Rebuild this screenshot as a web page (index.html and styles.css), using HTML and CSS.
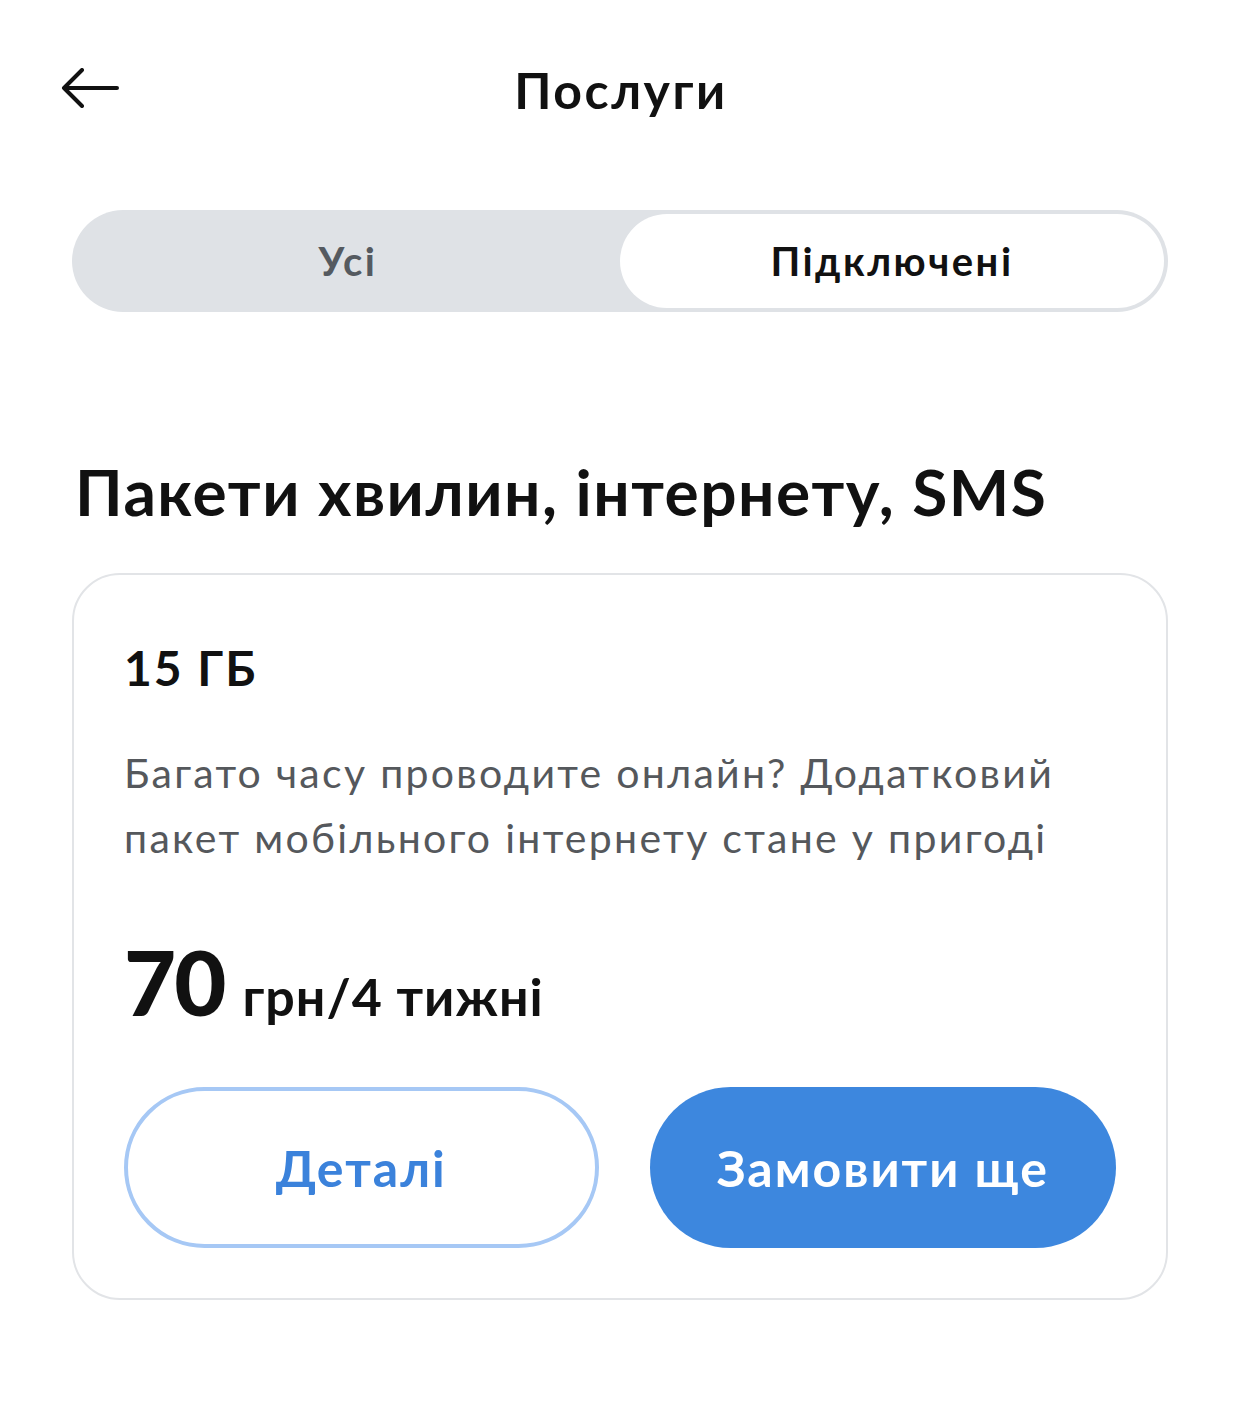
FILE: index.html
```html
<!DOCTYPE html>
<html lang="uk">
<head>
    <meta charset="UTF-8">
    <meta name="viewport" content="width=device-width, initial-scale=1.0">
    <title>Послуги</title>
    <link rel="stylesheet" href="styles.css">
</head>
<body>

    <!-- Header -->
    <div class="header">
        <a class="back" href="#">
            <svg width="60" height="40" viewBox="0 0 60 40">
                <path d="M57 20H4M22 2L4 20L22 38" fill="none" stroke="#111" stroke-width="4" stroke-linecap="round" stroke-linejoin="round"/>
            </svg>
        </a>
        <h1>Послуги</h1>
    </div>

    <div class="container">
        <!-- Tabs -->
        <div class="tabs">
            <div class="tab">Усі</div>
            <div class="tab active">Підключені</div>
        </div>

        <h2 class="section-title">Пакети хвилин, інтернету, SMS</h2>

        <!-- Package card -->
        <div class="card">
            <div class="card-name">15 ГБ</div>
            <p class="card-text">Багато часу проводите онлайн? Додатковий пакет мобільного інтернету стане у пригоді</p>
            <div class="price">
                <span class="price-value">70</span>
                <span class="price-unit">грн/4 тижні</span>
            </div>
            <div class="buttons">
                <button class="btn btn-outline" type="button">Деталі</button>
                <button class="btn btn-primary" type="button">Замовити ще</button>
            </div>
        </div>
    </div>

</body>
</html>
```

FILE: styles.css
```css
/* Basic reset */
* {
    margin: 0;
    padding: 0;
    box-sizing: border-box;
}

body {
    font-family: Lato, "Open Sans", Arial, sans-serif;
    background-color: #fff;
    color: #111;
    width: 1242px;
}

.header {
    height: 180px;
    display: flex;
    align-items: center;
    justify-content: center;
    position: relative;
}

.back {
    position: absolute;
    left: 60px;
    top: 68px;
    display: block;
    line-height: 0;
}

.header h1 {
    font-size: 50px;
    font-weight: 700;
    letter-spacing: 2.5px;
}

.container {
    padding: 30px 74px 0 72px;
}

.tabs {
    display: flex;
    height: 102px;
    padding: 4px;
    background-color: #dfe2e6;
    border-radius: 51px;
}

.tab {
    flex: 1;
    display: flex;
    align-items: center;
    justify-content: center;
    font-size: 40px;
    font-weight: 700;
    color: #555a60;
    border-radius: 47px;
    letter-spacing: 2.5px;
}

.tab.active {
    background-color: #fff;
    color: #111;
}

.section-title {
    font-size: 64px;
    font-weight: 700;
    margin: 145px 0 46px 3px;
    line-height: 1.1;
    letter-spacing: 1.5px;
}

.card {
    border: 2px solid #e2e4e7;
    border-radius: 48px;
    padding: 64px 50px 50px 50px;
}

.card-name {
    font-size: 48px;
    font-weight: 700;
    letter-spacing: 2px;
}

.card-text {
    margin-top: 44px;
    font-size: 41px;
    line-height: 65px;
    color: #55585c;
    letter-spacing: 2.3px;
}

.price {
    margin-top: 66px;
    display: flex;
    align-items: baseline;
    gap: 18px;
}

.price-value {
    font-size: 90px;
    font-weight: 900;
    line-height: 1;
    letter-spacing: -2px;
}

.price-unit {
    font-size: 52px;
    font-weight: 700;
    letter-spacing: 1px;
}

.buttons {
    margin-top: 60px;
    display: flex;
    gap: 51px;
}

.btn {
    flex: 1;
    height: 161px;
    border-radius: 81px;
    font-family: inherit;
    font-size: 50px;
    font-weight: 700;
    cursor: pointer;
    letter-spacing: 2px;
}

.btn-outline {
    background-color: #fff;
    border: 4px solid #a6c8f5;
    color: #3b82db;
}

.btn-primary {
    background-color: #3d87de;
    border: none;
    color: #fff;
}
```
